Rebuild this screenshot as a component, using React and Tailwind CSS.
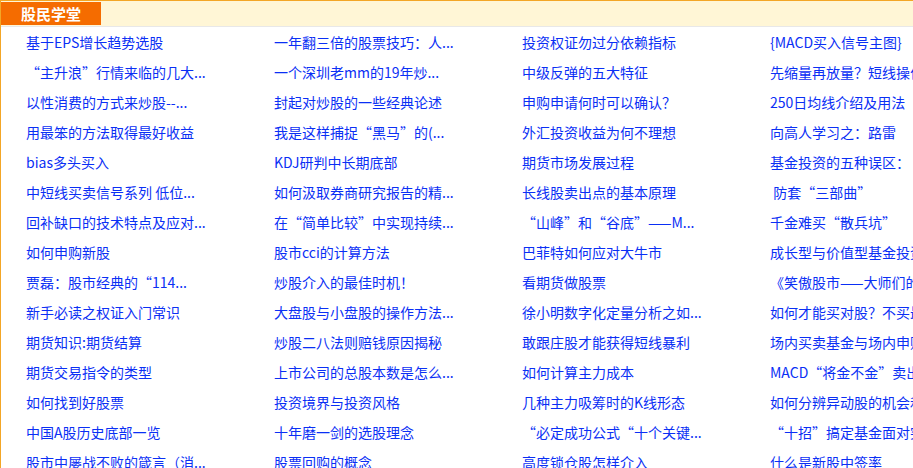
import React from 'react';

// four columns of article links, read top to bottom
const columns = [
  [
    '基于EPS增长趋势选股',
    '“主升浪”行情来临的几大...',
    '以性消费的方式来炒股--...',
    '用最笨的方法取得最好收益',
    'bias多头买入',
    '中短线买卖信号系列 低位...',
    '回补缺口的技术特点及应对...',
    '如何申购新股',
    '贾磊：股市经典的“114...',
    '新手必读之权证入门常识',
    '期货知识:期货结算',
    '期货交易指令的类型',
    '如何找到好股票',
    '中国A股历史底部一览',
    '股市中屡战不败的箴言（消...',
  ],
  [
    '一年翻三倍的股票技巧：人...',
    '一个深圳老mm的19年炒...',
    '封起对炒股的一些经典论述',
    '我是这样捕捉“黑马”的(...',
    'KDJ研判中长期底部',
    '如何汲取券商研究报告的精...',
    '在“简单比较”中实现持续...',
    '股市cci的计算方法',
    '炒股介入的最佳时机！',
    '大盘股与小盘股的操作方法...',
    '炒股二八法则赔钱原因揭秘',
    '上市公司的总股本数是怎么...',
    '投资境界与投资风格',
    '十年磨一剑的选股理念',
    '股票回购的概念',
  ],
  [
    '投资权证勿过分依赖指标',
    '中级反弹的五大特征',
    '申购申请何时可以确认？',
    '外汇投资收益为何不理想',
    '期货市场发展过程',
    '长线股卖出点的基本原理',
    '“山峰”和“谷底”——M...',
    '巴菲特如何应对大牛市',
    '看期货做股票',
    '徐小明数字化定量分析之如...',
    '敢跟庄股才能获得短线暴利',
    '如何计算主力成本',
    '几种主力吸筹时的K线形态',
    '“必定成功公式“十个关键...',
    '高度锁仓股怎样介入',
  ],
  [
    '{MACD买入信号主图}',
    '先缩量再放量？短线操作...',
    '250日均线介绍及用法',
    '向高人学习之：路雷',
    '基金投资的五种误区：',
    ' 防套“三部曲”',
    '千金难买“散兵坑”',
    '成长型与价值型基金投资...',
    '《笑傲股市——大师们的...',
    '如何才能买对股？不买最...',
    '场内买卖基金与场内申购...',
    'MACD“将金不金”卖出...',
    '如何分辨异动股的机会和...',
    '“十招”搞定基金面对突...',
    '什么是新股中签率',
  ],
];

const rows = columns[0].map((_, r) => columns.map((col) => col[r]));

export default function App() {
  return (
    <div className="w-[913px] h-[468px] overflow-hidden bg-white font-['Noto_Sans_CJK_SC','Noto_Sans',sans-serif]">
      <div className="w-[1000px] h-full border-t border-l border-[#f3a626]">
        {/* header strip */}
        <div className="h-[26px] flex items-start bg-[#fff6d6] border-b border-[#e8e8e8]">
          <div className="mt-[1px] w-[100px] h-[23px] bg-[#f56c00] text-white text-[15px] font-bold leading-[23px] text-center">
            股民学堂
          </div>
        </div>

        {/* link grid */}
        <div className="pl-[25px] grid grid-cols-[248px_248px_248px_248px]">
          {rows.map((row, r) =>
            row.map((text, c) => (
              <a
                key={`${r}-${c}`}
                href="#"
                className="h-[30px] leading-[30px] text-[14px] text-[#0a2ff5] whitespace-pre overflow-visible"
              >
                {text}
              </a>
            ))
          )}
        </div>
      </div>
    </div>
  );
}
